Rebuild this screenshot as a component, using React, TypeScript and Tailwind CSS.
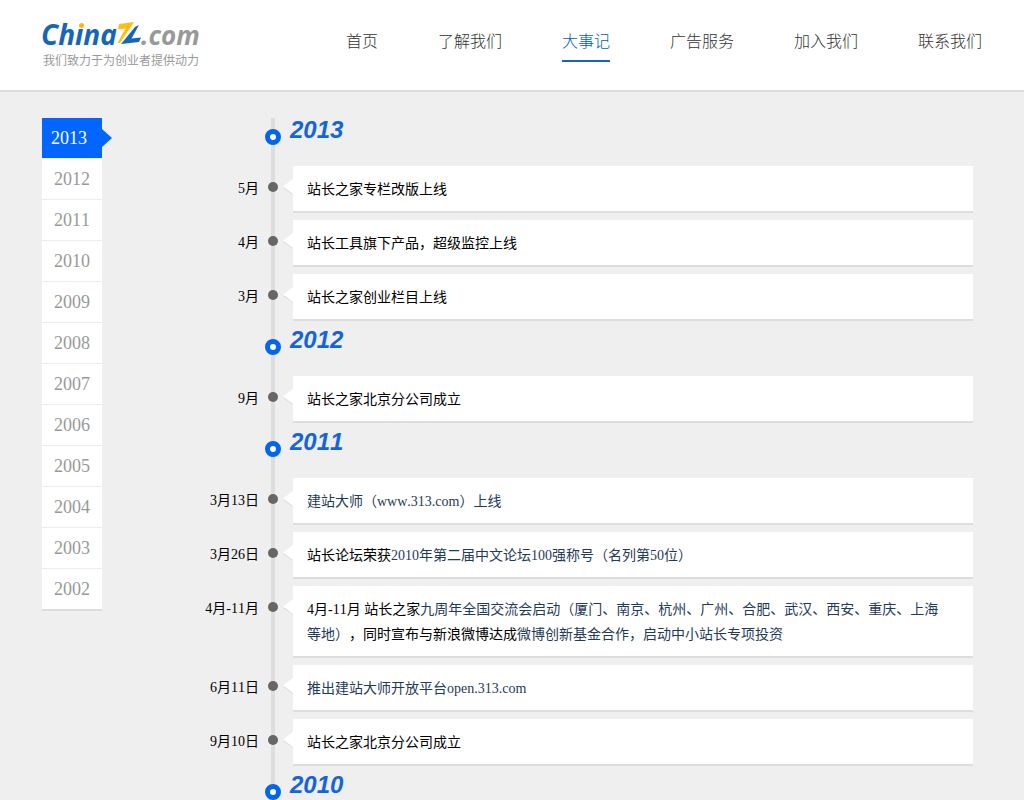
import React from 'react';

type Part = { text: string; link?: boolean };
type Entry = { date: string; parts: Part[] };
type YearGroup = { year: string; entries: Entry[] };

const navItems = ['首页', '了解我们', '大事记', '广告服务', '加入我们', '联系我们'];
const activeNav = '大事记';

const years = ['2013', '2012', '2011', '2010', '2009', '2008', '2007', '2006', '2005', '2004', '2003', '2002'];
const activeYear = '2013';

const timeline: YearGroup[] = [
  {
    year: '2013',
    entries: [
      { date: '5月', parts: [{ text: '站长之家专栏改版上线' }] },
      { date: '4月', parts: [{ text: '站长工具旗下产品，超级监控上线' }] },
      { date: '3月', parts: [{ text: '站长之家创业栏目上线' }] },
    ],
  },
  {
    year: '2012',
    entries: [{ date: '9月', parts: [{ text: '站长之家北京分公司成立' }] }],
  },
  {
    year: '2011',
    entries: [
      { date: '3月13日', parts: [{ text: '建站大师（www.313.com）上线', link: true }] },
      {
        date: '3月26日',
        parts: [{ text: '站长论坛荣获' }, { text: '2010年第二届中文论坛100强称号（名列第50位）', link: true }],
      },
      {
        date: '4月-11月',
        parts: [
          { text: '4月-11月 站长之家' },
          { text: '九周年全国交流会启动（厦门、南京、杭州、广州、合肥、武汉、西安、重庆、上海等地）', link: true },
          { text: '，同时宣布与新浪微博达成' },
          { text: '微博创新基金合作，启动中小站长专项投资', link: true },
        ],
      },
      { date: '6月11日', parts: [{ text: '推出建站大师开放平台open.313.com', link: true }] },
      { date: '9月10日', parts: [{ text: '站长之家北京分公司成立' }] },
    ],
  },
  { year: '2010', entries: [] },
];

const Logo: React.FC = () => (
  <a href="#" className="block">
    <svg width="160" height="28" viewBox="0 0 160 28" role="img" aria-label="Chinaz.com" className="block overflow-visible">
      <g fontFamily="'Open Sans'" fontWeight="700" fontStyle="italic">
        <text x="-1" y="24" fontSize="28" fill="#1565b8">China</text>
        <text x="99" y="24" fontSize="26" fill="#999999">.com</text>
      </g>
      {/* orange dot over the i */}
      <circle cx="39" cy="3.500" r="4.200" fill="#ffffff" />
      <circle cx="39.500" cy="4.500" r="2.500" fill="#f9b51c" />
      <path d="M77 3 L92 1 L78 22 L75.500 22 L83.500 7.500 L76 8.500 Z" fill="#fcc010" />
      <path d="M97 4 L93 6 L79 23 L97 21 L99 16.500 L89.500 17.500 Z" fill="#1565b8" />
      <path d="M92.500 3 L79 21.500" stroke="#ffffff" strokeWidth="1" />
    </svg>
    <span className="mt-1 ml-px block text-xs leading-4 font-normal text-[#999999]">我们致力于为创业者提供动力</span>
  </a>
);

const YearHeading: React.FC<{ year: string }> = ({ year }) => (
  <div className="flex h-12 items-start">
    <span className="mt-[11px] ml-[163px] size-4 shrink-0 rounded-full border-[5px] border-[#0066ee] bg-white" />
    <h2 className="ml-[9px] font-['Liberation_Sans'] text-2xl leading-6 font-bold text-[#1464dc] italic">{year}</h2>
  </div>
);

const EntryRow: React.FC<{ entry: Entry }> = ({ entry }) => (
  <li className="mb-[7px] flex items-start">
    <span className="w-[157px] shrink-0 pt-[10px] text-right">{entry.date}</span>
    <span className="mt-4 ml-[9px] size-[10px] shrink-0 rounded-full bg-[#666666]" />
    <svg width="10" height="16" viewBox="0 0 10 16" className="mt-[13px] ml-[5px] shrink-0">
      <path d="M0 9 L10 16 V13 L2 8 Z" fill="#dddddd" />
      <path d="M0 7.500 L10 0 V15 Z" fill="#ffffff" />
    </svg>
    <p className="flex-1 border-b-2 border-[#dddddd] bg-white pt-[11px] pr-6 pb-[9px] pl-[14px]">
      {entry.parts.map((part) =>
        part.link ? (
          <a key={part.text} href="#" className="text-[#1f3b57]">{part.text}</a>
        ) : (
          <span key={part.text}>{part.text}</span>
        )
      )}
    </p>
  </li>
);

export default function App() {
  return (
    <div className="min-h-screen bg-[#efefef] font-['Liberation_Serif','Noto_Sans_CJK_SC',serif] text-sm leading-[25px] text-black [font-kerning:none] [text-spacing-trim:space-all]">
      <header className="border-b-2 border-[#dddddd] bg-white">
        <div className="mx-auto flex h-[90px] max-w-[940px] items-start justify-between">
          <div className="pt-[21px]">
            <Logo />
          </div>
          <nav className="flex gap-[60px] pt-6 text-base leading-9 font-light text-[#333333]">
            {navItems.map((item) => (
              <a
                key={item}
                href="#"
                className={item === activeNav ? 'border-b-2 border-[#1464c8] text-[#0060b0]' : ''}
              >
                {item}
              </a>
            ))}
          </nav>
        </div>
      </header>

      <main className="mx-auto flex max-w-[940px] items-start pt-[26px] pr-[9px]">
        <aside className="w-[60px] shrink-0 border-b-2 border-[#dddddd] text-lg leading-10 text-[#999999]">
          {years.map((year) =>
            year === activeYear ? (
              <a key={year} href={`#${year}`} className="relative block bg-[#0066ff] pr-[6px] text-center text-white">
                {year}
                <svg width="10" height="20" viewBox="0 0 10 20" className="absolute top-[10px] left-full">
                  <path d="M0 1 L10 10 L0 19 Z" fill="#0066ff" />
                </svg>
              </a>
            ) : (
              <a key={year} href={`#${year}`} className="block border-t border-[#eeeeee] bg-white text-center">
                {year}
              </a>
            )
          )}
        </aside>

        <div className="relative flex-1">
          <div className="absolute inset-y-0 left-[169px] w-1 bg-[#dddddd]" />
          <div className="relative">
            {timeline.map((group) => (
              <section key={group.year} id={group.year}>
                <YearHeading year={group.year} />
                <ul>
                  {group.entries.map((entry) => (
                    <EntryRow key={entry.date} entry={entry} />
                  ))}
                </ul>
              </section>
            ))}
          </div>
        </div>
      </main>
    </div>
  );
}
